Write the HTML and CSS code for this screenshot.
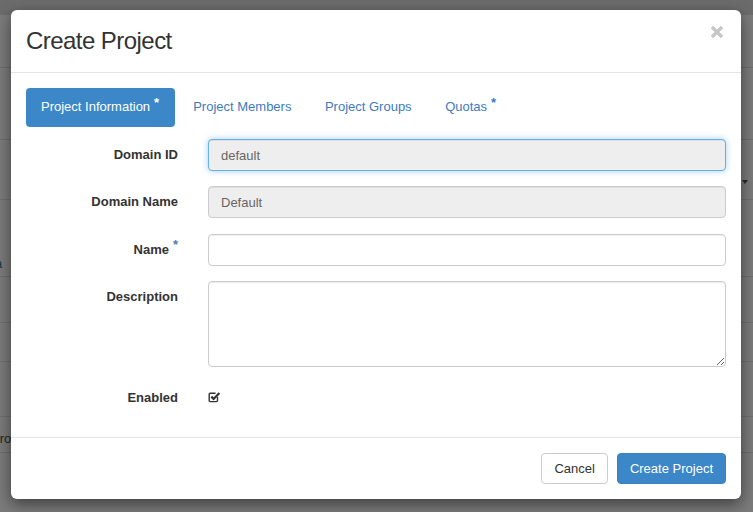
FILE: index.html
```html
<!DOCTYPE html>
<html lang="en">
<head>
<meta charset="utf-8">
<title>Create Project</title>
<link rel="stylesheet" href="styles.css">
</head>
<body>
<div class="page">
  <div class="topbar"></div>
  <div class="bg-row r1"></div>
  <div class="bg-row r2"></div>
  <div class="bg-row r3"><span class="caret"></span></div>
  <div class="bg-row r4"><span class="bg-link">a</span></div>
  <div class="bg-row r5"></div>
  <div class="bg-row r6"></div>
  <div class="bg-row r7"></div>
  <div class="bg-row r8"><span class="bg-text">Project</span></div>
</div>

<div class="modal">
  <div class="modal-header">
    <h4 class="modal-title">Create Project</h4>
    <button class="close" type="button" aria-label="Close">
      <svg width="14" height="14" viewBox="0 0 14 14"><path d="M2 2 L12 12 M12 2 L2 12" stroke="#c6c6c6" stroke-width="3.4" fill="none"/></svg>
    </button>
  </div>
  <div class="modal-body">
    <ul class="nav-pills">
      <li class="active"><a>Project Information<span class="req">*</span></a></li>
      <li><a>Project Members</a></li>
      <li><a>Project Groups</a></li>
      <li><a>Quotas<span class="req">*</span></a></li>
    </ul>
    <form class="form">
      <div class="group">
        <label class="lbl">Domain ID</label>
        <input class="ctrl focus" type="text" value="default" readonly>
      </div>
      <div class="group">
        <label class="lbl">Domain Name</label>
        <input class="ctrl" type="text" value="Default" readonly>
      </div>
      <div class="group">
        <label class="lbl">Name<span class="req">*</span></label>
        <input class="ctrl plain" type="text">
      </div>
      <div class="group">
        <label class="lbl">Description</label>
        <textarea class="ctrl plain area"></textarea>
      </div>
      <div class="group">
        <label class="lbl">Enabled</label>
        <span class="check">
          <svg width="13" height="12" viewBox="0 0 13 12"><path d="M9.5 5.8 V9.6 a1 1 0 0 1 -1 1 H2.2 a1 1 0 0 1 -1 -1 V3.3 a1 1 0 0 1 1 -1 H7.6" stroke="#333" stroke-width="1.4" fill="none"/><path d="M3.3 5.6 L5.6 7.9 L11.4 2" stroke="#333" stroke-width="2.2" fill="none"/></svg>
        </span>
      </div>
    </form>
  </div>
  <div class="modal-footer">
    <button class="btn" type="button">Cancel</button>
    <button class="btn primary" type="button">Create Project</button>
  </div>
</div>
</body>
</html>
```
FILE: styles.css
```css
* { box-sizing: border-box; }
html, body { margin: 0; padding: 0; }
body {
  width: 753px;
  height: 512px;
  overflow: hidden;
  background: #7b7b7b;
  font-family: "Liberation Sans", Arial, sans-serif;
  font-size: 13px;
  line-height: 1.42857;
  color: #333;
}

/* page behind the backdrop */
.page { width: 753px; }
.topbar { height: 15px; background: #6c6c6c; }
.bg-row { border-bottom: 1px solid #6f6f6f; display: flex; }
.r1 { height: 53px; }
.r2 { height: 72px; }
.r3 { height: 60px; justify-content: flex-end; align-items: flex-end; padding-bottom: 15px; }
.r4 { height: 77px; align-items: flex-end; padding-bottom: 2px; }
.r5 { height: 46px; }
.r6 { height: 39px; }
.r7 { height: 55px; }
.r8 { height: 36px; align-items: flex-end; padding-bottom: 3px; }
.caret {
  width: 0; height: 0;
  border-left: 3px solid transparent;
  border-right: 3px solid transparent;
  border-top: 4px solid #2a2a2a;
  margin-right: 5px;
}
.bg-link { color: #1c3650; margin-left: -5px; }
.bg-text { color: #222; margin-left: -9px; }

/* modal */
.modal {
  position: absolute;
  left: 11px;
  top: 10px;
  width: 730px;
  background: #fff;
  border-radius: 6px;
  box-shadow: 0 5px 15px rgba(0, 0, 0, 0.5);
}
.modal-header {
  display: flex;
  justify-content: space-between;
  align-items: flex-start;
  padding: 15px;
  border-bottom: 1px solid #e5e5e5;
}
.modal-title {
  margin: 0;
  font-size: 24px;
  font-weight: normal;
  line-height: 32px;
  letter-spacing: -0.55px;
  color: #333;
}
.close {
  border: 0;
  background: transparent;
  padding: 0;
  margin: 0 2px 0 0;
  width: 14px;
  height: 14px;
  display: flex;
}

.modal-body { padding: 15px; }

.nav-pills {
  list-style: none;
  margin: 0;
  padding: 0;
  display: flex;
  gap: 3.5px;
}
.nav-pills a {
  display: block;
  padding: 10px 15px 11px;
  line-height: 18px;
  border-radius: 4px;
  color: #3d7cbd;
}
.nav-pills .active a {
  background: #3c87c8;
  color: #fff;
  padding-right: 16px;
}
.nav-pills .active { margin-right: -0.5px; }
.req {
  position: relative;
  top: -4px;
  margin-left: 4px;
  font-weight: bold;
}
.lbl .req { color: #4f7db5; top: -5px; margin-left: 4px; }

.form { margin-top: 12px; }
.group {
  display: grid;
  grid-template-columns: 152px 1fr;
  column-gap: 30px;
  margin-bottom: 15.34px;
  align-items: start;
}
.group:last-child { margin-bottom: 14.8px; }
.lbl {
  text-align: right;
  font-weight: bold;
  padding-top: 7px;
  line-height: 18px;
  color: #333;
}
.ctrl {
  display: block;
  width: 100%;
  height: 32px;
  padding: 6px 12px;
  font-family: "Liberation Sans", Arial, sans-serif;
  font-size: 13px;
  color: #666;
  background: #eeeeee;
  border: 1px solid #cccccc;
  border-radius: 4px;
  box-shadow: inset 0 1px 1px rgba(0, 0, 0, 0.075);
  outline: none;
}
.ctrl.plain { background: #fff; }
.ctrl.focus {
  border-color: #66afe9;
  box-shadow: inset 0 1px 1px rgba(0, 0, 0, 0.075), 0 0 6px rgba(102, 175, 233, 0.6);
}
.area { height: 86px; resize: vertical; }
.check {
  display: flex;
  margin-top: 8.5px;
  height: 12px;
}

.modal-footer {
  display: flex;
  justify-content: flex-end;
  gap: 9px;
  padding: 15px;
  border-top: 1px solid #e5e5e5;
}
.btn {
  height: 31px;
  padding: 0 12px;
  font-family: "Liberation Sans", Arial, sans-serif;
  font-size: 13px;
  line-height: 29px;
  color: #333;
  background: #fff;
  border: 1px solid #cccccc;
  border-radius: 4px;
}
.btn.primary {
  background: #3c87c8;
  border-color: #3a81bf;
  color: #fff;
}
```
